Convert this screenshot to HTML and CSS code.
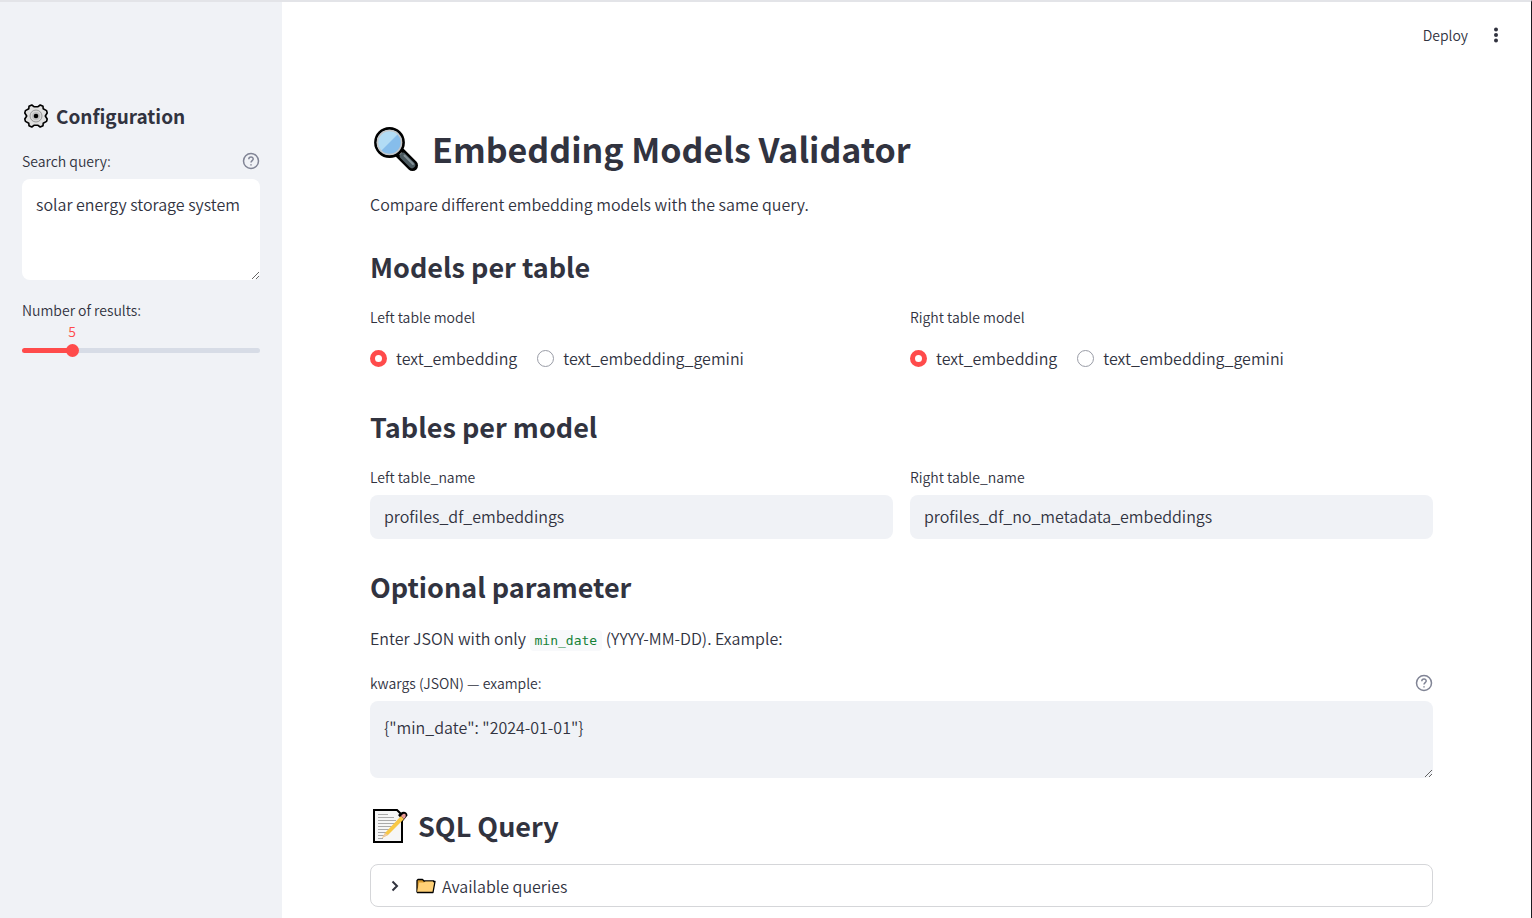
FILE: index.html
```html
<!DOCTYPE html>
<html lang="en">
<head>
<meta charset="utf-8">
<meta name="viewport" content="width=device-width, initial-scale=1">
<title>Embedding Models Validator</title>
<link rel="stylesheet" href="styles.css">
</head>
<body>
<div class="app">
  <aside class="sidebar">
    <h3 class="sidebar-title">
      <svg class="icon-gear" viewBox="0 0 28 28" aria-hidden="true">
        <path d="M9.800 3L12.300 4.800H15.700L18.200 3L21 4.300L21.200 6.800L24.600 8.600L25.200 11L23.300 14L25.200 17L24.600 19.400L21.200 21.200L21 23.700L18.200 25L15.700 23.200H12.300L9.800 25L7 23.700L6.800 21.200L3.400 19.400L2.800 17L4.700 14L2.800 11L3.400 8.600L6.800 6.800L7 4.300Z" fill="#e0e0e0" stroke="#000" stroke-width="1.600" stroke-linejoin="round"/>
        <circle cx="14" cy="14" r="6" fill="#d6d6d6" stroke="#888" stroke-width=".8"/>
        <circle cx="14" cy="14" r="4" fill="#bdbdbd"/>
        <circle cx="14" cy="14" r="2.300" fill="#000"/>
      </svg>
      Configuration
    </h3>
    <div class="field">
      <div class="label-row">
        <label class="label" for="query">Search query:</label>
        <button class="help" type="button" aria-label="Help for search query">
          <svg viewBox="0 0 18 18"><circle cx="9" cy="9" r="7.500"/><path d="M6.800 7.200C6.800 4.200 11.300 4.300 11.200 7.100C11.200 8.600 9 8.700 9 10.500M9 12.200V13.500"/></svg>
        </button>
      </div>
      <textarea class="control control-light query" id="query">solar energy storage system</textarea>
    </div>
    <div class="field">
      <label class="label" for="count">Number of results:</label>
      <div class="slider">
        <output class="slider-value" for="count">5</output>
        <div class="slider-track"><input class="slider-input" id="count" type="range" min="1" max="20" value="5"></div>
      </div>
    </div>
  </aside>
  <div class="page">
    <header class="toolbar">
      <button class="deploy" type="button">Deploy</button>
      <button class="menu" type="button" aria-label="Main menu">
        <svg viewBox="0 0 20 20"><circle cx="10" cy="4.500" r="2"/><circle cx="10" cy="10" r="2"/><circle cx="10" cy="15.500" r="2"/></svg>
      </button>
    </header>
    <main class="content">
      <h1 class="title">
        <svg class="icon-search" viewBox="-2 -2 52 52" aria-hidden="true">
          <path d="M28 28L40.500 40.500" stroke="#000" stroke-width="11" stroke-linecap="round"/>
          <path d="M26 26L31 31" stroke="#b5b5b5" stroke-width="3"/>
          <path d="M31 31L40 40" stroke="#4b5a60" stroke-width="6.500" stroke-linecap="round"/>
          <path d="M32.500 30.500L41 39" stroke="#849197" stroke-width="2" stroke-linecap="round"/>
          <circle cx="17.500" cy="17.500" r="14" fill="#86bdeb" stroke="#000" stroke-width="2.800"/>
          <path d="M8.500 26.500A12.700 12.700 0 0 1 26.500 8.500Z" fill="#b2dcf5"/>
          <circle cx="17.500" cy="17.500" r="12" fill="none" stroke="#c6c6c6" stroke-width="1.600"/>
        </svg>
        Embedding Models Validator
      </h1>
      <p class="text">Compare different embedding models with the same query.</p>

      <h2 class="heading">Models per table</h2>
      <div class="columns models">
        <fieldset class="choices">
          <legend class="label">Left table model</legend>
          <div class="options">
            <label class="option"><input type="radio" name="left" checked>text_embedding</label>
            <label class="option"><input type="radio" name="left">text_embedding_gemini</label>
          </div>
        </fieldset>
        <fieldset class="choices">
          <legend class="label">Right table model</legend>
          <div class="options">
            <label class="option"><input type="radio" name="right" checked>text_embedding</label>
            <label class="option"><input type="radio" name="right">text_embedding_gemini</label>
          </div>
        </fieldset>
      </div>

      <h2 class="heading">Tables per model</h2>
      <div class="columns tables">
        <div>
          <label class="label" for="left-table">Left table_name</label>
          <input class="control" id="left-table" type="text" value="profiles_df_embeddings">
        </div>
        <div>
          <label class="label" for="right-table">Right table_name</label>
          <input class="control" id="right-table" type="text" value="profiles_df_no_metadata_embeddings">
        </div>
      </div>

      <h2 class="heading">Optional parameter</h2>
      <p class="text hint">Enter JSON with only <code class="code">min_date</code> (YYYY-MM-DD). Example:</p>
      <div class="label-row">
        <label class="label" for="kwargs">kwargs (JSON) — example:</label>
        <button class="help" type="button" aria-label="Help for kwargs">
          <svg viewBox="0 0 18 18"><circle cx="9" cy="9" r="7.500"/><path d="M6.800 7.200C6.800 4.200 11.300 4.300 11.200 7.100C11.200 8.600 9 8.700 9 10.500M9 12.200V13.500"/></svg>
        </button>
      </div>
      <textarea class="control kwargs" id="kwargs">{"min_date": "2024-01-01"}</textarea>

      <h2 class="heading heading-icon">
        <svg class="icon-memo" viewBox="0 0 38 38" aria-hidden="true">
          <path d="M4 3H27L32 8V35H4Z" fill="#f6f6f6" stroke="#000" stroke-width="2"/>
          <path d="M8 7.500H18M8 10.500H24M8 13.500H26M8 16.500H25M8 19.500H23M8 22.500H20M8 25.500H18M8 28.500H15M8 31.500H13" stroke="#aaa" stroke-width="1"/>
          <path d="M28 8L32 5Q37 4 37.500 8.500L33 14Z" fill="#000"/>
          <path d="M15 26L31 9L34 12L18 28L12 31Z" fill="#f8c845"/>
          <path d="M15 26L18 28L12 31Z" fill="#edc9a5"/>
          <path d="M31 9L33 7Q36.500 6 35.500 10L34 12Z" fill="#e99a98"/>
        </svg>
        SQL Query
      </h2>
      <details class="expander">
        <summary>
          <svg class="icon-chevron" viewBox="0 0 20 20" aria-hidden="true"><path d="M7.500 5.500L12 10L7.500 14.500"/></svg>
          <svg class="icon-folder" viewBox="0 0 22 18" aria-hidden="true">
            <path d="M2 15.500V3.500L3 2.500H7.500L9 4H18.500V6" fill="#d6992e" stroke="#000" stroke-width="1.300" stroke-linejoin="round"/>
            <path d="M2 15.500L4 5.500L9 5.500L10.500 4.500H20L18 15.500Z" fill="#ffd177"/>
            <path d="M2 15.500H18L20 4.500H18" stroke="#000" stroke-width="1.300" stroke-linejoin="round"/>
          </svg>
          Available queries
        </summary>
      </details>
    </main>
  </div>
</div>
</body>
</html>
```
FILE: styles.css
```css
* { box-sizing: border-box; }

body {
  margin: 0;
  background: #fff;
  color: #31333f;
  font: 350 16px/28px "Noto Sans CJK SC", "Open Sans", sans-serif;
}

h1, h2, h3, p, fieldset { margin: 0; padding: 0; }
h1, h2, h3 { font-weight: 700; }
fieldset { min-width: 0; border: 0; }
legend { padding: 0; }
button { padding: 0; border: 0; background: none; color: inherit; font: inherit; cursor: pointer; }
svg { display: block; flex: none; fill: none; }

.app {
  display: flex;
  min-height: 100vh;
  border-top: 2px solid #e3e4e8;
  border-right: 1px solid #1b1b1f;
}

.sidebar { flex: none; width: 282px; padding: 98px 22px 0; background: #f0f2f6; }
.sidebar-title { display: flex; align-items: center; gap: 6px; margin-bottom: 17px; font-size: 19px; line-height: 32px; }
.icon-gear { width: 28px; height: 28px; }

.field { margin-bottom: 18px; }
.label { display: block; font-size: 14px; line-height: 24px; }
.label-row { display: flex; align-items: center; justify-content: space-between; }
.help svg { width: 18px; height: 18px; stroke: #808495; stroke-width: 1.5; }

.control {
  display: block;
  width: 100%;
  height: 44px;
  margin: 6px 0 0;
  padding: 0 14px 2px;
  border: 0;
  border-radius: 8px;
  background: #f0f2f6;
  color: inherit;
  font: inherit;
}
.control-light { background: #fff; }
textarea.query { height: 101px; padding-top: 11px; }
textarea.kwargs { height: 77px; padding-top: 12px; }

.slider { position: relative; padding-top: 26px; }
.slider-value {
  position: absolute;
  top: -3px;
  left: 21%;
  transform: translateX(-50%);
  color: #ff4b4b;
  font-size: 14px;
  line-height: 24px;
}
.slider-track {
  display: flex;
  align-items: center;
  height: 5px;
  border-radius: 3px;
  background: linear-gradient(to right, #ff4b4b 21%, #d7dce6 21%);
}
.slider-input { flex: 1; min-width: 0; height: 13px; margin: 0 -6px; appearance: none; background: none; }
.slider-input::-webkit-slider-thumb { width: 13px; height: 13px; appearance: none; border-radius: 50%; background: #ff4b4b; }

.page { flex: 1; min-width: 0; }
.toolbar { display: flex; align-items: center; justify-content: flex-end; gap: 18px; height: 66px; padding-right: 25px; }
.deploy { font-size: 14px; }
.menu svg { width: 20px; height: 20px; fill: #31333f; }

.content { padding: 54px 98px 11px 88px; }
.title { display: flex; align-items: center; gap: 10px; margin-bottom: 16px; font-size: 34px; line-height: 53px; }
.icon-search { width: 52px; height: 52px; }
.text { margin-bottom: 2px; line-height: 26px; }
.heading { padding: 28px 0 18px; font-size: 27px; line-height: 40px; }
.columns { display: grid; grid-template-columns: 1fr 1fr; gap: 17px; }
.models { padding-bottom: 7px; }
.options { display: flex; flex-wrap: wrap; gap: 20px; padding: 15px 0 0; }
.option { display: flex; align-items: center; gap: 9px; }
.option input { width: 17px; height: 17px; margin: 0; appearance: none; border: 1px solid #999ca6; border-radius: 50%; background: #fff; }
.option input:checked { border: 5px solid #ff4b4b; }
.hint { margin-bottom: 20px; }
.code { padding: 3px 5px; border-radius: 4px; background: #f8f9fb; color: #158237; font: 13px "DejaVu Sans Mono", monospace; }
.heading-icon { display: flex; align-items: center; gap: 10px; }
.icon-memo { width: 38px; height: 38px; }

.expander { border: 1px solid #d5d6d9; border-radius: 8px; }
.expander summary { display: flex; align-items: center; height: 41px; padding: 0 14px; list-style: none; cursor: pointer; }
.icon-chevron { width: 20px; height: 20px; margin-right: 10px; stroke: #31333f; stroke-width: 2; }
.icon-folder { width: 22px; height: 18px; margin-right: 5px; }
```
